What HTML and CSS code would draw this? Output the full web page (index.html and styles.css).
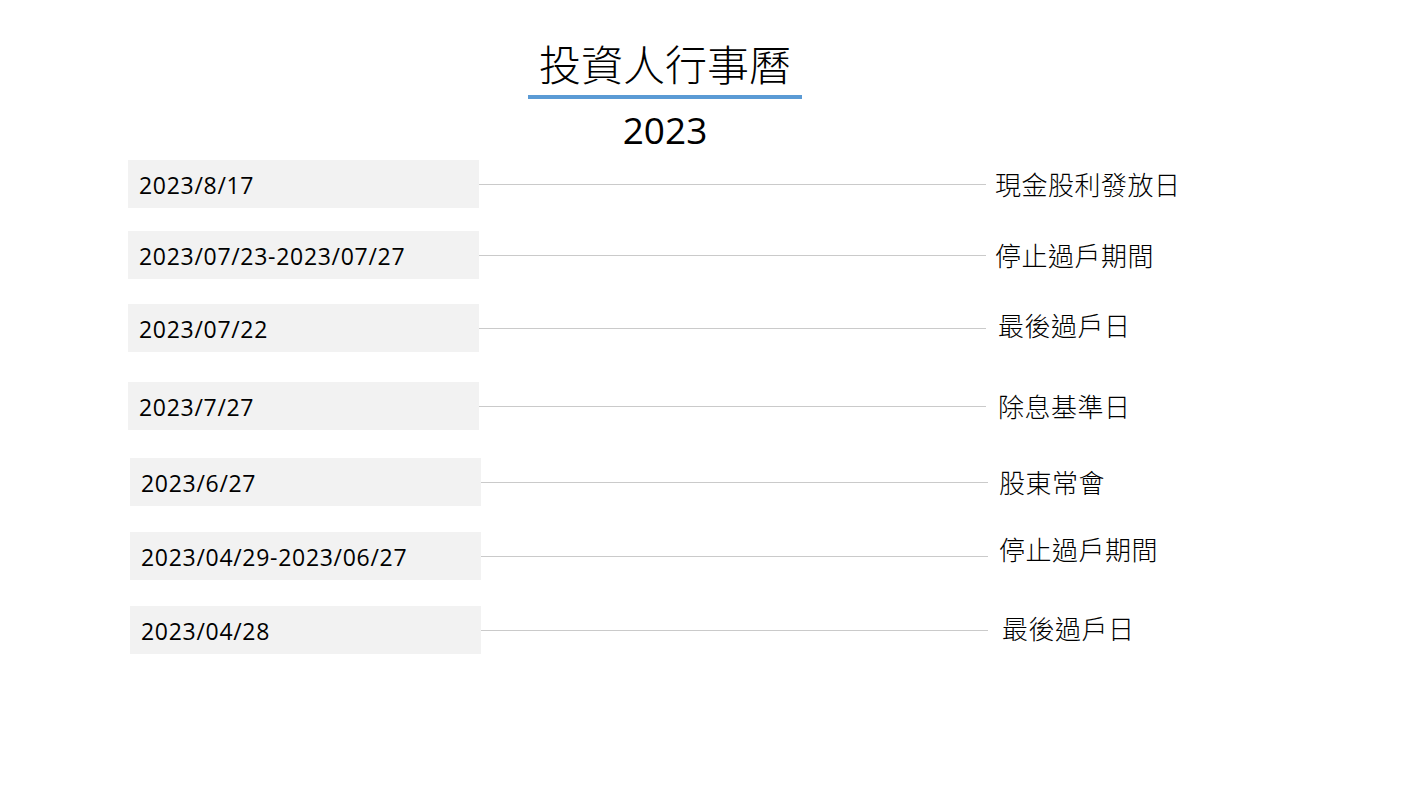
FILE: index.html
```html
<!DOCTYPE html>
<html lang="zh-Hant">
<head>
<meta charset="utf-8">
<title>投資人行事曆</title>
<link rel="stylesheet" href="styles.css">
</head>
<body>
<div class="slide">
  <header class="header">
    <h1 class="title">投資人行事曆</h1>
    <div class="bar"></div>
    <div class="year">2023</div>
  </header>
  <section class="rows">
    <div class="row">
      <div class="date">2023/8/17</div>
      <div class="line"></div>
      <div class="label">現金股利發放日</div>
    </div>
    <div class="row r2">
      <div class="date">2023/07/23-2023/07/27</div>
      <div class="line"></div>
      <div class="label">停止過戶期間</div>
    </div>
    <div class="row r3">
      <div class="date">2023/07/22</div>
      <div class="line"></div>
      <div class="label l-far up3">最後過戶日</div>
    </div>
    <div class="row r4">
      <div class="date">2023/7/27</div>
      <div class="line"></div>
      <div class="label l-far">除息基準日</div>
    </div>
    <div class="row r5 shift">
      <div class="date">2023/6/27</div>
      <div class="line"></div>
      <div class="label l-mid">股東常會</div>
    </div>
    <div class="row r6 shift">
      <div class="date">2023/04/29-2023/06/27</div>
      <div class="line"></div>
      <div class="label l-mid up7">停止過戶期間</div>
    </div>
    <div class="row r7 shift">
      <div class="date">2023/04/28</div>
      <div class="line"></div>
      <div class="label l-far2 up2">最後過戶日</div>
    </div>
  </section>
</div>
</body>
</html>
```

FILE: styles.css
```css
* { box-sizing: border-box; }

html, body {
  margin: 0;
  padding: 0;
  background: #ffffff;
}

.slide {
  width: 1422px;
  height: 802px;
  background: #ffffff;
  color: #000000;
  overflow: hidden;
}

.header {
  margin-left: 528px;
  width: 274px;
  padding-top: 38px;
  display: flex;
  flex-direction: column;
  align-items: stretch;
  text-align: center;
}

.title {
  margin: 0;
  font-family: "Noto Sans CJK TC", "Noto Sans CJK SC", sans-serif;
  font-weight: 200;
  font-size: 42px;
  line-height: 50px;
  letter-spacing: 0;
}

.bar {
  height: 4px;
  margin-top: 7px;
  background: #5b9bd5;
}

.year {
  margin-top: 11px;
  font-family: "Open Sans", "Noto Sans", sans-serif;
  font-size: 37px;
  line-height: 40px;
}

.rows {
  margin-top: 10px;
  padding-left: 128px;
  display: flex;
  flex-direction: column;
}

.row {
  display: flex;
  align-items: center;
  height: 48px;
}

.r2 { margin-top: 23px; }
.r3 { margin-top: 25px; }
.r4 { margin-top: 30px; }
.r5 { margin-top: 28px; }
.r6 { margin-top: 26px; }
.r7 { margin-top: 26px; }

.shift { margin-left: 2px; }

.date {
  width: 351px;
  height: 48px;
  flex: none;
  background: #f2f2f2;
  padding-left: 11px;
  display: flex;
  align-items: center;
  padding-top: 2px;
  font-family: "Open Sans", "Noto Sans", sans-serif;
  font-size: 23px;
  letter-spacing: 0.7px;
  white-space: nowrap;
}

.line {
  width: 507px;
  height: 1px;
  flex: none;
  background: #cacaca;
}

.label {
  margin-left: 9px;
  font-family: "Noto Sans CJK TC", "Noto Sans CJK SC", sans-serif;
  font-weight: 200;
  font-size: 26px;
  letter-spacing: 0.5px;
  line-height: 34px;
  white-space: nowrap;
}

.l-far { margin-left: 12px; }
.l-mid { margin-left: 11px; }
.l-far2 { margin-left: 14px; }

.up2 { margin-bottom: 4px; }
.up3 { margin-bottom: 6px; }
.up7 { margin-bottom: 14px; }
```
